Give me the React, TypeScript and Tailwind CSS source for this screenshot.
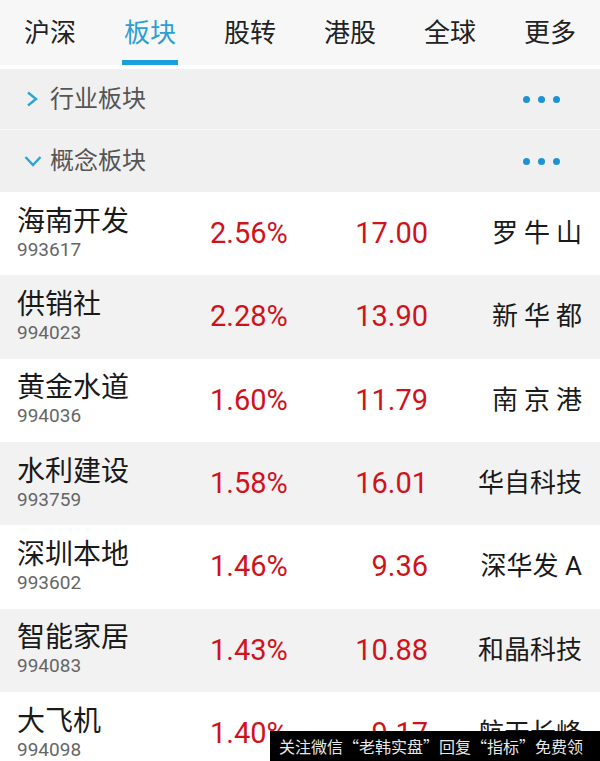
const tabs = ["沪深", "板块", "股转", "港股", "全球", "更多"];

const rows = [
  { name: "海南开发", code: "993617", pct: "2.56%", price: "17.00", lead: "罗牛山" },
  { name: "供销社", code: "994023", pct: "2.28%", price: "13.90", lead: "新华都" },
  { name: "黄金水道", code: "994036", pct: "1.60%", price: "11.79", lead: "南京港" },
  { name: "水利建设", code: "993759", pct: "1.58%", price: "16.01", lead: "华自科技" },
  { name: "深圳本地", code: "993602", pct: "1.46%", price: "9.36", lead: "深华发 A" },
  { name: "智能家居", code: "994083", pct: "1.43%", price: "10.88", lead: "和晶科技" },
  { name: "大飞机", code: "994098", pct: "1.40%", price: "9.17", lead: "航天长峰" },
];

function Dots() {
  return (
    <div className="flex gap-[8px]">
      <span className="w-[7px] h-[7px] rounded-full bg-[#1c93d3]" />
      <span className="w-[7px] h-[7px] rounded-full bg-[#1c93d3]" />
      <span className="w-[7px] h-[7px] rounded-full bg-[#1c93d3]" />
    </div>
  );
}

function Lead({ text }: { text: string }) {
  // three-character names are spread out to the width of a four-character one
  if (text.length === 3) {
    return (
      <div className="flex justify-between w-[90px]">
        {text.split("").map((c, i) => (
          <span key={i}>{c}</span>
        ))}
      </div>
    );
  }
  return <span className="whitespace-pre">{text}</span>;
}

export default function App() {
  return (
    <div
      className="relative w-[600px] h-[761px] overflow-hidden bg-white"
      style={{ fontFamily: 'Roboto, "Noto Sans CJK SC", sans-serif' }}
    >
      <div className="grid grid-cols-6 h-[65px] bg-[#f7f7f7]">
        {tabs.map((t, i) => (
          <div key={t} className="relative flex items-center justify-center">
            <span
              className={
                i === 1
                  ? "text-[26px] text-[#2a9fd4] leading-none"
                  : "text-[26px] text-[#222] leading-none"
              }
            >
              {t}
            </span>
            {i === 1 && (
              <span className="absolute bottom-0 left-[22px] w-[56px] h-[5px] bg-[#1aa0dc]" />
            )}
          </div>
        ))}
      </div>
      <div className="h-[4px] bg-white" />

      <div className="bg-[#f0f0f0]">
        <div className="flex items-center justify-between h-[61px] pl-[26px] pr-[40px] border-b border-[#fafafa]">
          <div className="flex items-center">
            <svg width="14" height="16" viewBox="0 0 14 16" className="mr-[10px]">
              <polyline points="2,1.5 10,8 2,14.5" fill="none" stroke="#2aa5d5" strokeWidth="2.4" />
            </svg>
            <span className="text-[24px] text-[#555]">行业板块</span>
          </div>
          <Dots />
        </div>
        <div className="flex items-center justify-between h-[62px] pl-[24px] pr-[40px]">
          <div className="flex items-center">
            <svg width="18" height="12" viewBox="0 0 18 12" className="mr-[8px]">
              <polyline points="1.5,2 9,10 16.5,2" fill="none" stroke="#2aa5d5" strokeWidth="2.4" />
            </svg>
            <span className="text-[24px] text-[#555]">概念板块</span>
          </div>
          <Dots />
        </div>
      </div>

      {rows.map((r, i) => (
        <div
          key={r.code}
          className={
            i % 2 === 0
              ? "flex items-center h-[83.33px] pl-[17px] pr-[18px] bg-white"
              : "flex items-center h-[83.33px] pl-[17px] pr-[18px] bg-[#f2f2f2]"
          }
        >
          <div className="w-[193px] flex flex-col">
            <span className="text-[28px] leading-[32px] text-[#1a1a1a]">{r.name}</span>
            <span className="text-[19px] leading-[24px] text-[#666]">{r.code}</span>
          </div>
          <div className="w-[120px] text-[29px] text-[#d0121b]">{r.pct}</div>
          <div className="w-[98px] text-right text-[29px] text-[#d0121b]">{r.price}</div>
          <div className="flex-1 flex justify-end text-[26px] text-[#1a1a1a]">
            <Lead text={r.lead} />
          </div>
        </div>
      ))}

      <div className="absolute right-0 bottom-0 w-[330px] h-[30px] bg-black flex items-center pl-[9px]">
        <span
          className="text-[16px] text-[#e8e8e8] whitespace-nowrap leading-none"
          style={{ fontFamily: '"Noto Sans CJK SC", sans-serif' }}
        >
          关注微信“老韩实盘”回复“指标”免费领
        </span>
      </div>
    </div>
  );
}
